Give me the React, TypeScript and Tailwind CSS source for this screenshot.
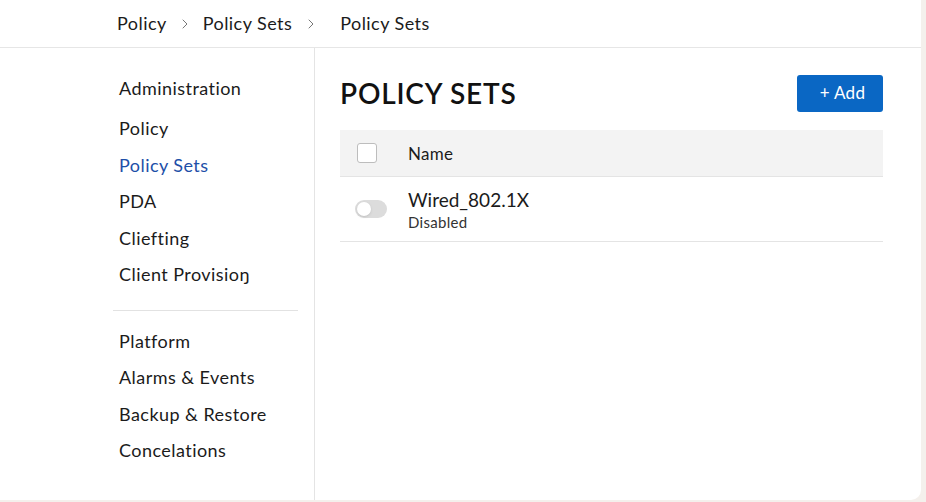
import { ChevronRight } from "lucide-react"

const groupOne = ["Policy", "Policy Sets", "PDA", "Cliefting", "Client Provisioŋ"]
const groupTwo = ["Platform", "Alarms & Events", "Backup & Restore", "Concelations"]

function NavItem({ label, active }: { label: string; active?: boolean }) {
	return (
		<div className={`h-[36.5px] flex items-center text-[18px] tracking-[0.45px] ${active ? "text-[#1d4fa8]" : "text-[#1b1b1b]"}`}>
			{label}
		</div>
	)
}

export default function App() {
	return (
		<div
			className="w-full h-[502px] bg-[#f4f0ec] flex overflow-hidden"
			style={{ fontFamily: "Lato, 'Open Sans', sans-serif" }}
		>
			<div className="w-[921px] h-[500px] bg-white rounded-br-[10px] flex flex-col">
				<header className="h-[48px] border-b border-[#e6e6e6] flex items-center pl-[117px] text-[18px] tracking-[0.45px] text-[#1b1b1b]">
					<span>Policy</span>
					<ChevronRight className="w-4 h-4 ml-[10px] mr-[10px] text-[#777]" strokeWidth={1.5} />
					<span>Policy Sets</span>
					<ChevronRight className="w-4 h-4 ml-[11px] mr-[21px] text-[#777]" strokeWidth={1.5} />
					<span>Policy Sets</span>
				</header>

				<div className="flex flex-1">
					<aside className="w-[315px] border-r border-[#e4e4e4] pt-[22px] pl-[113px] pr-[16px]">
						<div className="pl-[6px]">
							<div className="h-[36.5px] flex items-center text-[18px] tracking-[0.45px] text-[#1b1b1b] mb-[4px]">Administration</div>
							{groupOne.map((item) => (
								<NavItem key={item} label={item} active={item === "Policy Sets"} />
							))}
						</div>
						<div className="border-t border-[#e2e2e2] mt-[17px] mb-[12px]" />
						<div className="pl-[6px]">
							{groupTwo.map((item) => (
								<NavItem key={item} label={item} />
							))}
						</div>
					</aside>

					<main className="flex-1 pl-[25px] pr-[38px] pt-[26px]">
						<div className="flex items-center justify-between h-[38px]">
							<h1 className="text-[28px] font-semibold text-[#111] tracking-[0.8px]">POLICY SETS</h1>
							<button className="w-[86px] h-[37px] rounded-[3px] bg-[#0a67c4] text-white text-[17px] tracking-[0.3px] flex items-center justify-center pl-[5px]">
								+ Add
							</button>
						</div>

						<div className="mt-[18px]">
							<div className="h-[47px] bg-[#f3f3f3] border-b border-[#e4e4e4] flex items-center">
								<div className="w-[20px] h-[20px] border border-[#bdbdbd] rounded-[3px] bg-white ml-[17px]" />
								<span className="ml-[31px] text-[17px] tracking-[0.3px] text-[#1b1b1b] pt-[2px]">Name</span>
							</div>
							<div className="h-[65px] border-b border-[#e4e4e4] flex items-center">
								<div className="ml-[15px] w-[32px] h-[18px] rounded-full bg-[#dcdcdc] flex items-center px-[2px]">
									<div className="w-[14px] h-[14px] rounded-full bg-white shadow-sm" />
								</div>
								<div className="ml-[21px] flex flex-col leading-tight pt-[2px]">
									<span className="text-[19px] text-[#1b1b1b]">Wired_802.1X</span>
									<span className="text-[15px] text-[#333] tracking-[0.3px] mt-[1px]">Disabled</span>
								</div>
							</div>
						</div>
					</main>
				</div>
			</div>
		</div>
	)
}
